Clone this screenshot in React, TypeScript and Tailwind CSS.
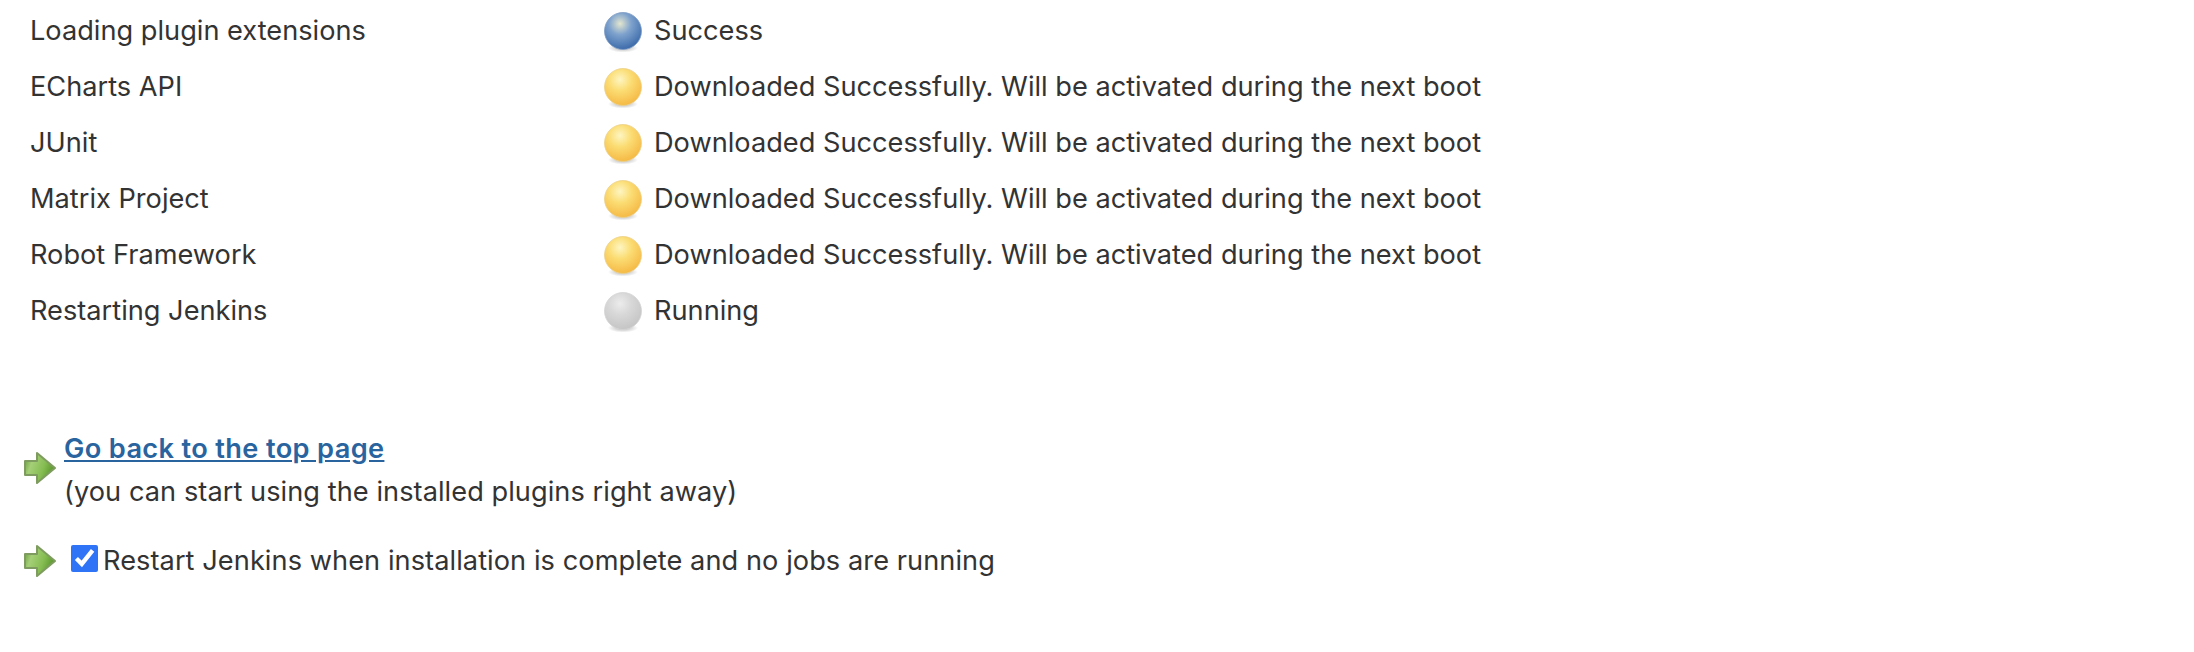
const rows = [
  { name: "Loading plugin extensions", ball: "blue", status: "Success" },
  { name: "ECharts API", ball: "yellow", status: "Downloaded Successfully. Will be activated during the next boot" },
  { name: "JUnit", ball: "yellow", status: "Downloaded Successfully. Will be activated during the next boot" },
  { name: "Matrix Project", ball: "yellow", status: "Downloaded Successfully. Will be activated during the next boot" },
  { name: "Robot Framework", ball: "yellow", status: "Downloaded Successfully. Will be activated during the next boot" },
  { name: "Restarting Jenkins", ball: "grey", status: "Running" },
];

const ballColors: Record<string, string[]> = {
  blue: ["#e3e6cf", "#7ea2cd", "#3a69a9", "#7d9cc4"],
  yellow: ["#fdf5c2", "#fbdd74", "#f5b843", "#ecd08a"],
  grey: ["#ececec", "#d8d8d8", "#c4c4c4", "#d4d4d4"],
};

const Ball = ({ kind }: { kind: string }) => {
  const [a, b, c, d] = ballColors[kind];
  return (
    <svg width="40" height="44" viewBox="0 0 40 44" className="shrink-0 blur-[0.4px]">
      <defs>
        <radialGradient id={`ball-${kind}`} cx="0.42" cy="0.3" r="0.72">
          <stop offset="0" stopColor={a} />
          <stop offset="0.42" stopColor={b} />
          <stop offset="1" stopColor={c} />
        </radialGradient>
        <radialGradient id={`shadow-${kind}`}>
          <stop offset="0.4" stopColor="#888" stopOpacity="0.4" />
          <stop offset="1" stopColor="#888" stopOpacity="0" />
        </radialGradient>
      </defs>
      <ellipse cx="20" cy="39" rx="15" ry="4.5" fill={`url(#shadow-${kind})`} />
      <circle cx="20" cy="22" r="18.5" fill={`url(#ball-${kind})`} stroke={d} strokeWidth="0.8" />
    </svg>
  );
};

const Arrow = ({ className }: { className?: string }) => (
  <svg width="34" height="34" viewBox="0 0 34 34" className={`shrink-0 blur-[0.5px] ${className ?? ""}`}>
    <defs>
      <linearGradient id="arrow-fill" x1="0" y1="0" x2="1" y2="0.35">
        <stop offset="0" stopColor="#5f9438" />
        <stop offset="0.3" stopColor="#a5cf78" />
        <stop offset="0.7" stopColor="#86bd52" />
        <stop offset="1" stopColor="#5d9a30" />
      </linearGradient>
    </defs>
    <path
      d="M2 10H14V2L32 17 14 32V24H2Z"
      fill="url(#arrow-fill)"
      stroke="#7f9c60"
      strokeWidth="2"
      strokeLinejoin="round"
    />
  </svg>
);

const App = () => {
  return (
    <div className="h-[652px] w-[2194px] overflow-hidden bg-white pt-[3px] font-['Inter',_sans-serif] text-[27.2px] text-[#333]">
      <div className="pl-[30px]">
        {rows.map((row) => (
          <div key={row.name} className="flex h-[56px] items-center">
            <div className="w-[573px]">{row.name}</div>
            <Ball kind={row.ball} />
            <div className="ml-[11px]">{row.status}</div>
          </div>
        ))}
      </div>

      <div className="mt-[88px] flex items-center pl-[23px]">
        <Arrow className="mb-[5px]" />
        <div className="ml-[7px]">
          <a href="#" className="block font-semibold leading-[43px] tracking-[0.35px] text-[#2a649f] underline">
            Go back to the top page
          </a>
          <div className="leading-[43px] tracking-[0.05px]">(you can start using the installed plugins right away)</div>
        </div>
      </div>

      <div className="mt-[20px] flex h-[56px] items-center pl-[23px]">
        <Arrow />
        <input
          type="checkbox"
          defaultChecked
          className="mr-[5px] mb-[6px] ml-[14px] h-[27px] w-[27px] accent-[#2f74f6]"
        />
        <span className="tracking-[0.06px]">Restart Jenkins when installation is complete and no jobs are running</span>
      </div>
    </div>
  );
};

export default App;
